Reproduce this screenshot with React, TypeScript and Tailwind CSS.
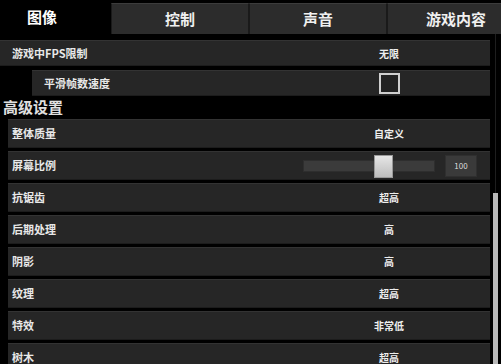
const font = '[font-family:"Noto_Sans_CJK_SC","Noto_Sans",sans-serif]';

const tabs = ['图像', '控制', '声音', '游戏内容'];

const rows: [string, string][] = [
  ['整体质量', '自定义'],
  ['屏幕比例', ''],
  ['抗锯齿', '超高'],
  ['后期处理', '高'],
  ['阴影', '高'],
  ['纹理', '超高'],
  ['特效', '非常低'],
  ['树木', '超高'],
];

function Row({ label, children, className = '' }: { label: string; children?: React.ReactNode; className?: string }) {
  return (
    <div
      className={`flex items-center bg-[#262626] border-t border-t-[#333] border-b border-b-[#1c1c1c] ${className}`}
    >
      <span className="flex-1 pl-[4px] text-[11px] font-bold text-[#e8e8e8]">{label}</span>
      {children}
    </div>
  );
}

export default function App() {
  return (
    <div className={`w-[501px] h-[364px] bg-black overflow-hidden ${font}`}>
      {/* tabs */}
      <div className="flex h-[34px] ml-[-27px]">
        {tabs.map((t, i) => (
          <div
            key={t}
            className={
              i === 0
                ? 'w-[138px] shrink-0 flex items-center justify-center bg-black text-white text-[15px] font-bold'
                : 'w-[138px] shrink-0 mt-[3px] flex items-center justify-center bg-[#2c2c2c] border-t border-t-[#3c3c3c] border-x border-x-[#1a1a1a] text-[#f0f0f0] text-[15px] font-bold'
            }
          >
            {t}
          </div>
        ))}
      </div>

      <div className="flex">
        <div className="w-[490px] shrink-0 pt-[6px]">
          <Row label="游戏中FPS限制" className="h-[26px] pl-[8px]">
            <span className="w-[98px] mr-[52px] text-center text-[10px] font-bold text-[#eee]">无限</span>
          </Row>

          <Row label="平滑帧数速度" className="h-[26px] mt-[4px] ml-[32px] pl-[8px]">
            <span className="w-[98px] mr-[52px] flex justify-center">
              <span className="w-[21px] h-[21px] border-2 border-[#cfcfcf] bg-[#222]" />
            </span>
          </Row>

          <div className="h-[23px] pl-[3px] flex items-center text-[15px] font-bold text-[#e0e0e0]">高级设置</div>

          <div className="ml-[8px] flex flex-col gap-[3px]">
            {rows.map(([label, value]) =>
              label === '屏幕比例' ? (
                <Row key={label} label={label} className="h-[29px]">
                  <div className="relative w-[132px] h-[12px] bg-[#3b3b3b] border border-[#2e2e2e]">
                    <div className="absolute left-[70px] top-[-6px] w-[19px] h-[23px] bg-gradient-to-b from-[#e6e6e6] to-[#bdbdbd] border border-[#999]" />
                  </div>
                  <div className="ml-[10px] mr-[13px] w-[32px] h-[22px] bg-[#3a3a3a] border border-[#2f2f2f] flex items-center justify-center text-[8px] text-[#ddd]">
                    100
                  </div>
                </Row>
              ) : (
                <Row key={label} label={label} className="h-[29px]">
                  <span className="w-[98px] mr-[52px] text-center text-[10px] font-bold text-[#eee]">{value}</span>
                </Row>
              )
            )}
          </div>
        </div>

        {/* scrollbar */}
        <div className="flex-1 flex justify-center">
          <div className="relative w-[5px] h-full">
            <div className="absolute left-[2px] top-0 bottom-0 w-px bg-[#1e1e1e]" />
            <div className="absolute left-0 top-[159px] w-[5px] h-[200px] bg-[#b8b8b8]" />
          </div>
        </div>
      </div>
    </div>
  );
}
